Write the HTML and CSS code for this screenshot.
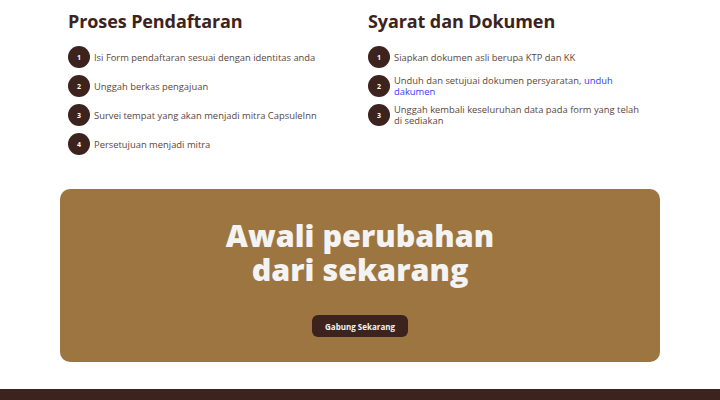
FILE: index.html
```html
<!DOCTYPE html>
<html lang="id">
<head>
<meta charset="utf-8">
<link rel="stylesheet" href="styles.css">
</head>
<body>
<section class="steps">
  <div class="col">
    <h2 class="title">Proses Pendaftaran</h2>
    <ol class="list">
      <li class="item"><span class="num">1</span><span class="txt">Isi Form pendaftaran sesuai dengan identitas anda</span></li>
      <li class="item"><span class="num">2</span><span class="txt">Unggah berkas pengajuan</span></li>
      <li class="item"><span class="num">3</span><span class="txt">Survei tempat yang akan menjadi mitra CapsuleInn</span></li>
      <li class="item"><span class="num">4</span><span class="txt">Persetujuan menjadi mitra</span></li>
    </ol>
  </div>
  <div class="col">
    <h2 class="title">Syarat dan Dokumen</h2>
    <ol class="list">
      <li class="item"><span class="num">1</span><span class="txt">Siapkan dokumen asli berupa KTP dan KK</span></li>
      <li class="item"><span class="num">2</span><span class="txt">Unduh dan setujuai dokumen persyaratan, <a class="link" href="#">unduh dakumen</a></span></li>
      <li class="item"><span class="num">3</span><span class="txt">Unggah kembali keseluruhan data pada form yang telah di sediakan</span></li>
    </ol>
  </div>
</section>
<section class="cta">
  <h1 class="cta-title"><span class="cta-line">Awali perubahan</span><span class="cta-line">dari sekarang</span></h1>
  <a class="btn" href="#">Gabung Sekarang</a>
</section>
<footer class="footer"></footer>
</body>
</html>
```
FILE: styles.css
```css
* { box-sizing: border-box; }
body {
  margin: 0;
  background: #fff;
  font-family: "Open Sans", "DejaVu Sans", sans-serif;
  color: #3d231d;
}
.steps {
  width: 600px;
  margin: 0 auto;
  padding: 8px 8px 0;
  display: grid;
  grid-template-columns: 300px 280px;
  height: 189px;
}
.title {
  margin: 0 0 12px;
  font-size: 18px;
  line-height: 26px;
  font-weight: 700;
  color: #3d231d;
  letter-spacing: -0.1px;
}
.list {
  list-style: none;
  margin: 0;
  padding: 0;
  display: flex;
  flex-direction: column;
  gap: 7px;
}
.item {
  display: flex;
  align-items: center;
  gap: 4px;
  min-height: 22px;
}
.num {
  flex: none;
  width: 22px;
  height: 22px;
  border-radius: 50%;
  background: #3d231d;
  color: #fff;
  font-size: 7px;
  font-weight: 700;
  display: flex;
  align-items: center;
  justify-content: center;
}
.txt {
  font-size: 9.4px;
  line-height: 11px;
  color: #5b4640;
  max-width: 256px;
}
.link { color: #3a3aff; text-decoration: none; }
.cta {
  width: 600px;
  height: 173px;
  margin: 0 auto;
  background: #9d7541;
  border-radius: 10px;
  display: flex;
  flex-direction: column;
  align-items: center;
  padding-top: 29px;
}
.cta-title {
  margin: 0;
  color: #f3f3f3;
  font-size: 30.5px;
  line-height: 34px;
  font-weight: 800;
  text-align: center;
  display: flex;
  flex-direction: column;
  align-items: center;
}
.btn {
  margin-top: 29px;
  width: 96px;
  height: 22px;
  border-radius: 6px;
  background: #3d231d;
  color: #f3f3f3;
  font-size: 8px;
  font-weight: 700;
  text-decoration: none;
  display: flex;
  align-items: center;
  justify-content: center;
}
.footer {
  margin-top: 27px;
  height: 11px;
  background: #3d231d;
}
```
